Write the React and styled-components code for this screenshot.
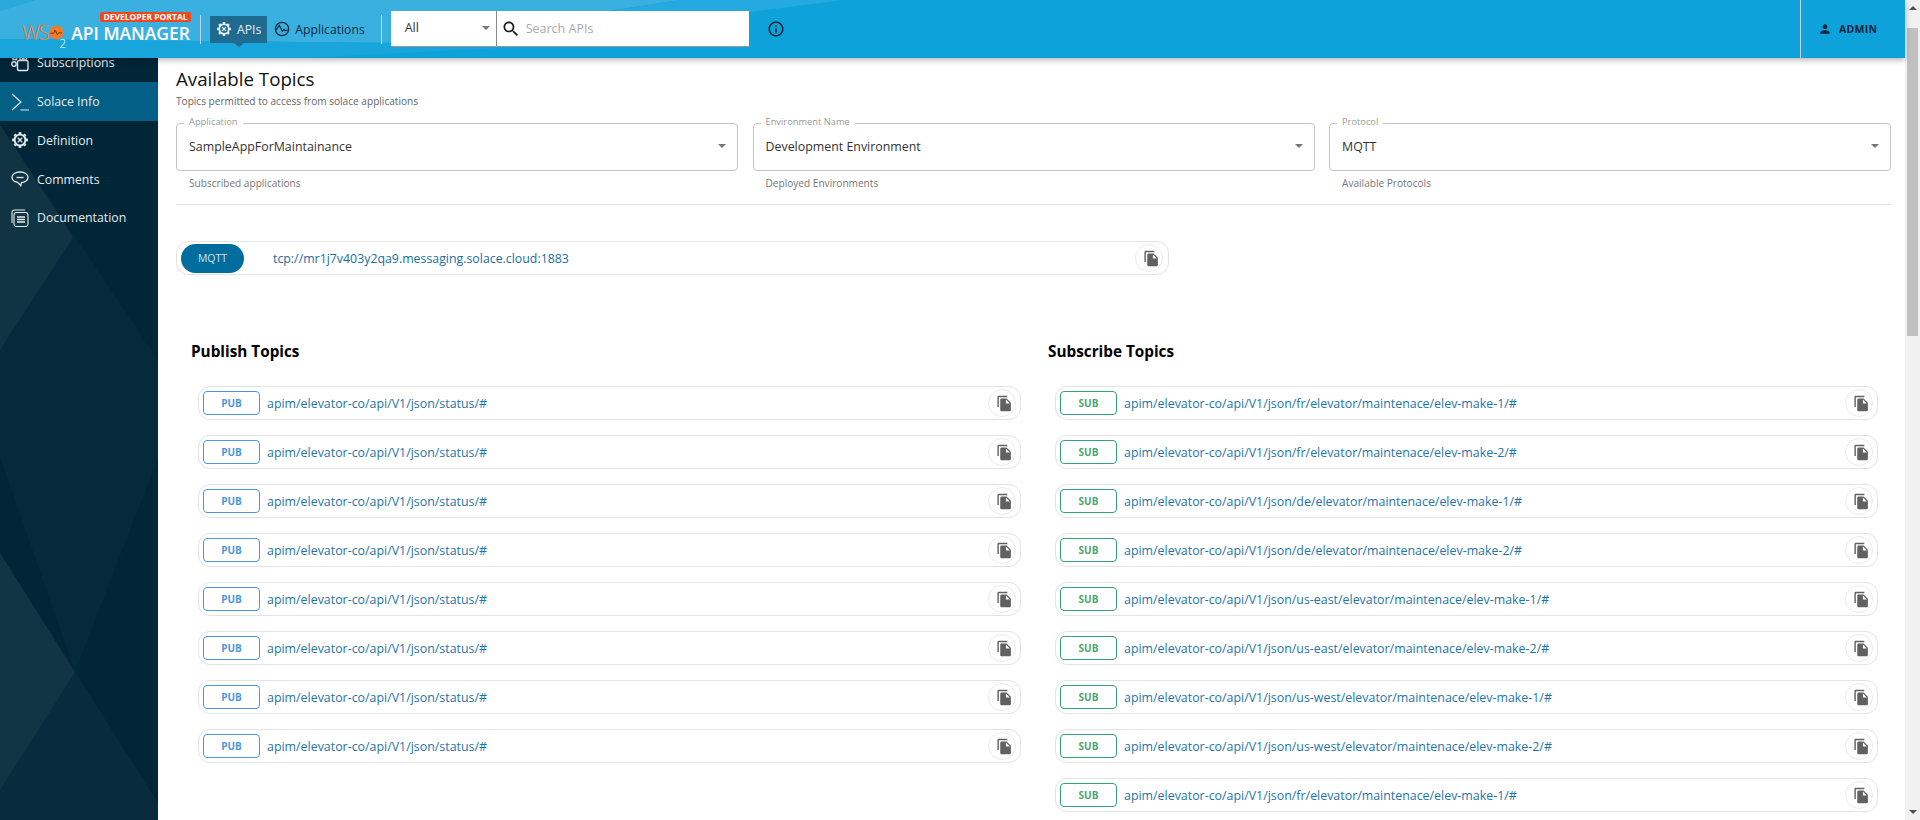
import styled, { createGlobalStyle } from 'styled-components';

const GlobalStyle = createGlobalStyle`
  html, body {
    margin: 0;
    padding: 0;
    height: 100%;
    overflow: hidden;
    background: #fff;
    font-family: "Open Sans", "Noto Sans", sans-serif;
  }
  * {
    box-sizing: border-box;
  }
`;

const publishTopics = Array(8).fill('apim/elevator-co/api/V1/json/status/#');

const subscribeTopics = [
  'apim/elevator-co/api/V1/json/fr/elevator/maintenace/elev-make-1/#',
  'apim/elevator-co/api/V1/json/fr/elevator/maintenace/elev-make-2/#',
  'apim/elevator-co/api/V1/json/de/elevator/maintenace/elev-make-1/#',
  'apim/elevator-co/api/V1/json/de/elevator/maintenace/elev-make-2/#',
  'apim/elevator-co/api/V1/json/us-east/elevator/maintenace/elev-make-1/#',
  'apim/elevator-co/api/V1/json/us-east/elevator/maintenace/elev-make-2/#',
  'apim/elevator-co/api/V1/json/us-west/elevator/maintenace/elev-make-1/#',
  'apim/elevator-co/api/V1/json/us-west/elevator/maintenace/elev-make-2/#',
  'apim/elevator-co/api/V1/json/fr/elevator/maintenace/elev-make-1/#',
];

const fields = [
  { label: 'Application', value: 'SampleAppForMaintainance', help: 'Subscribed applications' },
  { label: 'Environment Name', value: 'Development Environment', help: 'Deployed Environments' },
  { label: 'Protocol', value: 'MQTT', help: 'Available Protocols' },
];

function GearIcon({ size = 18 }) {
  const teeth = [0, 45, 90, 135, 180, 225, 270, 315];
  return (
    <svg width={size} height={size} viewBox="0 0 24 24" fill="none" stroke="currentColor">
      <circle cx="12" cy="12" r="7.2" strokeWidth="2.6" />
      {teeth.map((a) => (
        <line key={a} x1="12" y1="1.5" x2="12" y2="5" strokeWidth="3.6" transform={`rotate(${a} 12 12)`} />
      ))}
      <path d="M9 9l6 6M15 9l-6 6" strokeWidth="1.6" />
    </svg>
  );
}

function PulseIcon() {
  return (
    <svg width="16" height="16" viewBox="0 0 24 24" fill="none" stroke="currentColor" strokeWidth="1.8">
      <circle cx="12" cy="12" r="10" />
      <path d="M2.500 14.500L8 6.500l4.500 9 2.500-3 1.500 2 5-1" />
    </svg>
  );
}

function CopyIcon() {
  return (
    <svg width="17" height="17" viewBox="0 0 24 24" fill="currentColor">
      <path d="M16 1H4c-1.100 0-2 .9-2 2v14h2V3h12V1zm-1 4l6 6v10c0 1.100-.9 2-2 2H7.990C6.890 23 6 22.100 6 21l.01-14c0-1.100.89-2 1.990-2h7zm-1 7h5.500L14 6.500V12z" />
    </svg>
  );
}

function SubscriptionsIcon() {
  return (
    <svg width="18" height="18" viewBox="0 0 18 18" fill="none" stroke="currentColor" strokeWidth="1.4">
      <rect x="6.5" y="6.5" width="10.5" height="10" rx="1.5" />
      <circle cx="3" cy="10" r="2.2" />
      <path d="M2 2.500h3.500v3H2zM9 1.500h2.500v4.500H9zM13 1.500h2.500v4.500H13z" />
    </svg>
  );
}

function TerminalIcon() {
  return (
    <svg width="18" height="18" viewBox="0 0 18 18" fill="none" stroke="currentColor" strokeWidth="1.2">
      <path d="M1 1l9 8-9 8M9.500 17H18" />
    </svg>
  );
}

function CommentIcon() {
  return (
    <svg width="18" height="18" viewBox="0 0 18 18" fill="none" stroke="currentColor" strokeWidth="1.3">
      <path d="M9 2c4.600 0 8 2.200 8 5.300s-3 5.200-6.500 5.300l-.8 3-3-3.300C3.400 11.900 1 10 1 7.300 1 4.200 4.400 2 9 2z" />
      <path d="M5.500 7.500h7" />
    </svg>
  );
}

function DocsIcon() {
  return (
    <svg width="18" height="18" viewBox="0 0 18 18" fill="none" stroke="currentColor" strokeWidth="1.1">
      <rect x="3" y="3.500" width="14" height="14" rx="2.500" />
      <path d="M1 14V3.500A2.500 2.500 0 0 1 3.500 1H14" />
      <path d="M6 8h8M6 10.500h8M6 13h8" strokeWidth="1.3" />
    </svg>
  );
}

function CopyButton() {
  return (
    <RoundButton type="button">
      <CopyIcon />
    </RoundButton>
  );
}

function TopicRow({ kind, topic }) {
  return (
    <Row>
      <Badge $kind={kind}>{kind}</Badge>
      <TopicText>{topic}</TopicText>
      <CopyButton />
    </Row>
  );
}

export default function App() {
  return (
    <Page>
      <GlobalStyle />
      <Main>
        <Header>
          <HeaderArt width="1000" height="58" viewBox="0 0 1000 58">
            <polygon points="0,11 35,0 680,0 400,43 0,39" fill="#3ab0e0" />
            <polygon points="400,43 680,0 843,0 750,12 520,47" fill="#24a9e0" />
            <polygon points="0,0 35,0 0,11" fill="#2aa9dd" />
            <polygon points="0,39 400,43 520,47 300,58 0,58" fill="#18a5dc" />
          </HeaderArt>
          <Logo>
            <LogoBadge>DEVELOPER PORTAL</LogoBadge>
            <LogoWs>WS</LogoWs>
            <svg width="17" height="17" viewBox="0 0 19 19">
              <circle cx="9.5" cy="9.5" r="9" fill="#f47b20" />
              <path d="M2 10.500h4l2-4 3 6 1.500-2.500H17" fill="none" stroke="#3a2a20" strokeWidth="1" />
            </svg>
            <LogoTwo>2</LogoTwo>
            <LogoName>API MANAGER</LogoName>
          </Logo>
          <HeaderDivider />
          <TabItem $active>
            <GearIcon size={16} />
            APIs
          </TabItem>
          <TabItem>
            <PulseIcon />
            Applications
          </TabItem>
          <HeaderDivider />
          <SearchBar>
            <SearchScope>
              All
              <Caret />
            </SearchScope>
            <SearchInput>
              <svg width="20" height="20" viewBox="0 0 24 24" fill="#1b1b1b">
                <path d="M15.500 14h-.79l-.28-.27C15.410 12.590 16 11.110 16 9.500 16 5.910 13.090 3 9.500 3S3 5.910 3 9.500 5.910 16 9.500 16c1.610 0 3.090-.59 4.230-1.570l.27.28v.79l5 4.990L20.490 19l-4.990-5zm-6 0C7.010 14 5 11.990 5 9.500S7.010 5 9.500 5 14 7.010 14 9.500 11.990 14 9.500 14z" />
              </svg>
              <Placeholder>Search APIs</Placeholder>
            </SearchInput>
          </SearchBar>
          <InfoButton>
            <svg width="18" height="18" viewBox="0 0 24 24" fill="currentColor">
              <path d="M11 7h2v2h-2zm0 4h2v6h-2zm1-9C6.480 2 2 6.480 2 12s4.480 10 10 10 10-4.480 10-10S17.520 2 12 2zm0 18c-4.410 0-8-3.590-8-8s3.590-8 8-8 8 3.590 8 8-3.590 8-8 8z" />
            </svg>
          </InfoButton>
          <UserBox>
            <svg width="14" height="14" viewBox="0 0 24 24" fill="currentColor">
              <path d="M12 12c2.210 0 4-1.790 4-4s-1.790-4-4-4-4 1.790-4 4 1.790 4 4 4zm0 2c-2.670 0-8 1.340-8 4v2h16v-2c0-2.660-5.330-4-8-4z" />
            </svg>
            ADMIN
          </UserBox>
        </Header>
        <Body>
          <Sidebar>
            <SidebarArt width="158" height="762" viewBox="0 0 158 762">
              <polygon points="0,67 158,302 158,400 75,614 0,399" fill="#ffffff" opacity="0.02" />
              <polygon points="0,67 73,179 0,292" fill="#ffffff" opacity="0.05" />
              <polygon points="0,495 75,614 0,732" fill="#ffffff" opacity="0.07" />
              <polygon points="75,614 158,745 158,762 0,762 0,732" fill="#ffffff" opacity="0.03" />
            </SidebarArt>
            <NavList>
              <NavItem>
                <SubscriptionsIcon />
                Subscriptions
              </NavItem>
              <NavItem $active>
                <TerminalIcon />
                Solace Info
              </NavItem>
              <NavItem>
                <GearIcon />
                Definition
              </NavItem>
              <NavItem>
                <CommentIcon />
                Comments
              </NavItem>
              <NavItem>
                <DocsIcon />
                Documentation
              </NavItem>
            </NavList>
          </Sidebar>
          <Content>
            <Title>Available Topics</Title>
            <Subtitle>Topics permitted to access from solace applications</Subtitle>
            <Fields>
              {fields.map((field) => (
                <Field key={field.label}>
                  <Outline>
                    <Legend>{field.label}</Legend>
                    {field.value}
                    <FieldCaret />
                  </Outline>
                  <Help>{field.help}</Help>
                </Field>
              ))}
            </Fields>
            <Divider />
            <EndpointRow>
              <ProtocolPill>MQTT</ProtocolPill>
              <EndpointUrl>tcp://mr1j7v403y2qa9.messaging.solace.cloud:1883</EndpointUrl>
              <CopyButton />
            </EndpointRow>
            <Columns>
              <Column>
                <Heading>Publish Topics</Heading>
                <RowList>
                  {publishTopics.map((topic, i) => (
                    <TopicRow key={`${topic}-${i}`} kind="PUB" topic={topic} />
                  ))}
                </RowList>
              </Column>
              <Column>
                <Heading>Subscribe Topics</Heading>
                <RowList>
                  {subscribeTopics.map((topic, i) => (
                    <TopicRow key={`${topic}-${i}`} kind="SUB" topic={topic} />
                  ))}
                </RowList>
              </Column>
            </Columns>
          </Content>
        </Body>
      </Main>
      <Scrollbar>
        <ScrollArrow />
        <ScrollThumb />
        <ScrollArrow $down />
      </Scrollbar>
    </Page>
  );
}

const Page = styled.div`
  display: flex;
  width: 1920px;
  height: 820px;
  overflow: hidden;
`;

const Main = styled.div`
  display: flex;
  flex-direction: column;
  flex: 1;
  min-width: 0;
`;

const Header = styled.header`
  position: relative;
  z-index: 2;
  display: flex;
  align-items: center;
  flex: 0 0 58px;
  padding-left: 22px;
  background: #0ea2db;
  box-shadow: 0 2px 6px rgba(0, 0, 0, 0.3);
`;

const HeaderArt = styled.svg`
  position: absolute;
  top: 0;
  left: 0;
`;

const Logo = styled.div`
  position: relative;
  display: flex;
  align-items: center;
  flex: 0 0 168px;
  min-width: 0;
  height: 58px;
  padding-top: 7px;
`;

const LogoBadge = styled.span`
  position: absolute;
  top: 12px;
  left: 78px;
  width: 91px;
  height: 10px;
  border-radius: 2px;
  background: #f1471d;
  color: #fff;
  font-size: 8.5px;
  font-weight: 700;
  line-height: 10px;
  text-align: center;
  white-space: nowrap;
`;

const LogoWs = styled.span`
  color: #f47b20;
  font-size: 20px;
  font-weight: 300;
  letter-spacing: -1px;
`;

const LogoTwo = styled.span`
  align-self: flex-end;
  margin: 0 5px 7px -4px;
  color: #fff;
  font-size: 12px;
  font-weight: 300;
  line-height: 14px;
`;

const LogoName = styled.span`
  color: #fff;
  font-size: 17.5px;
  font-weight: 600;
  white-space: nowrap;
`;

const HeaderDivider = styled.span`
  position: relative;
  flex: 0 0 1px;
  height: 29px;
  margin: 0 9px 0 10px;
  background: #c4d6dd;
`;

const TabItem = styled.div`
  position: relative;
  display: flex;
  align-items: center;
  gap: 5px;
  height: 27px;
  margin-right: ${(props) => (props.$active ? '7px' : '6px')};
  padding: 0 ${(props) => (props.$active ? '6px' : '0')};
  background: ${(props) => (props.$active ? '#1f6a8f' : 'transparent')};
  color: ${(props) => (props.$active ? '#e6eef2' : '#0d2c40')};
  font-size: 12.2px;
  white-space: nowrap;

  &::after {
    content: '';
    display: ${(props) => (props.$active ? 'block' : 'none')};
    position: absolute;
    left: 24px;
    bottom: -4px;
    border-left: 5px solid transparent;
    border-right: 5px solid transparent;
    border-top: 4px solid #1f6a8f;
  }
`;

const SearchBar = styled.div`
  position: relative;
  display: flex;
  height: 36px;
  border-bottom: 1px solid #999;
  background: #fff;
  font-size: 12.5px;
`;

const SearchScope = styled.div`
  display: flex;
  align-items: center;
  justify-content: space-between;
  width: 106px;
  padding: 0 6px 2px 14px;
  border-right: 1px solid #888;
  color: #333;
`;

const Caret = styled.span`
  border-left: 4px solid transparent;
  border-right: 4px solid transparent;
  border-top: 4px solid #777;
`;

const SearchInput = styled.div`
  display: flex;
  align-items: center;
  gap: 5px;
  width: 252px;
  padding-left: 4px;
`;

const Placeholder = styled.span`
  color: #aaa;
`;

const InfoButton = styled.div`
  position: relative;
  display: flex;
  margin-left: 18px;
  color: #0d2030;
`;

const UserBox = styled.div`
  position: relative;
  display: flex;
  align-items: center;
  gap: 7px;
  align-self: stretch;
  margin-left: auto;
  width: 105px;
  padding-left: 17px;
  border-left: 1px solid #c4d6dd;
  color: #0d2436;
  font-size: 10.5px;
  font-weight: 700;
  letter-spacing: 0.3px;
`;

const Body = styled.div`
  display: flex;
  flex: 1;
  min-height: 0;
`;

const Sidebar = styled.nav`
  position: relative;
  flex: 0 0 158px;
  overflow: hidden;
  background: #012638;
`;

const SidebarArt = styled.svg`
  position: absolute;
  top: 0;
  left: 0;
`;

const NavList = styled.div`
  position: relative;
  margin-top: -14.6px;
`;

const NavItem = styled.div`
  display: flex;
  align-items: center;
  gap: 8px;
  height: 38.8px;
  padding-left: 11px;
  background: ${(props) => (props.$active ? '#035f85' : 'transparent')};
  color: #e4ebef;
  font-size: 12.3px;
`;

const Content = styled.main`
  flex: 1;
  min-width: 0;
  padding: 9px 14px 0 18px;
  overflow: hidden;
`;

const Title = styled.h1`
  margin: 0;
  color: #111;
  font-size: 18.7px;
  font-weight: 400;
  line-height: 24px;
`;

const Subtitle = styled.p`
  margin: 2px 0 0;
  color: #666;
  font-size: 10.1px;
  line-height: 16px;
`;

const Fields = styled.div`
  display: grid;
  grid-template-columns: repeat(3, 562px);
  gap: 14.5px;
  margin-top: 14px;
`;

const Field = styled.div`
  min-width: 0;
`;

const Outline = styled.div`
  position: relative;
  display: flex;
  align-items: center;
  height: 48px;
  padding: 0 12px 1px;
  border: 1px solid #c4c4c4;
  border-radius: 4px;
  color: #333;
  font-size: 12.4px;
`;

const Legend = styled.span`
  position: absolute;
  top: -9px;
  left: 7px;
  padding: 0 5px;
  background: #fff;
  color: #9a9a9a;
  font-size: 9.3px;
  line-height: 14px;
`;

const FieldCaret = styled.span`
  position: absolute;
  top: 20px;
  right: 11px;
  border-left: 4px solid transparent;
  border-right: 4px solid transparent;
  border-top: 4px solid #777;
`;

const Help = styled.p`
  margin: 4px 0 0 13px;
  color: #777;
  font-size: 10.1px;
  line-height: 16px;
`;

const Divider = styled.hr`
  height: 1px;
  margin: 13px 0 0;
  border: 0;
  background: #e0e0e0;
`;

const EndpointRow = styled.div`
  display: flex;
  align-items: center;
  width: 993px;
  height: 34px;
  margin-top: 36px;
  padding: 0 1px 0 4px;
  border: 1px solid #e3e3e3;
  border-radius: 12px;
`;

const ProtocolPill = styled.span`
  display: flex;
  align-items: center;
  justify-content: center;
  width: 63px;
  height: 29px;
  border-radius: 15px;
  background: #006d9e;
  color: #d3e3ec;
  font-size: 10.5px;
`;

const EndpointUrl = styled.span`
  flex: 1;
  margin-left: 29px;
  color: #1a6e9e;
  font-size: 12.35px;
`;

const RoundButton = styled.button`
  display: flex;
  align-items: center;
  justify-content: center;
  flex: 0 0 28px;
  height: 28px;
  margin-right: 4px;
  padding: 0 0 0 4px;
  border: 1px solid #ebebeb;
  border-radius: 50%;
  background: #fff;
  color: #616161;
`;

const Columns = styled.div`
  display: grid;
  grid-template-columns: 857px 1fr;
  margin: 65px 0 0 15px;
`;

const Column = styled.section`
  min-width: 0;
`;

const Heading = styled.h2`
  margin: 0;
  color: #000;
  font-size: 15.3px;
  font-weight: 700;
  line-height: 22px;
`;

const RowList = styled.div`
  display: flex;
  flex-direction: column;
  gap: 15px;
  width: 823px;
  margin: 24px 0 0 7px;
`;

const Row = styled.div`
  display: flex;
  align-items: center;
  flex: 0 0 34px;
  padding: 0 0 0 4px;
  border: 1px solid #e3e3e3;
  border-radius: 12px;
`;

const Badge = styled.span`
  display: flex;
  align-items: center;
  justify-content: center;
  flex: 0 0 57px;
  height: 24px;
  border: 1px solid ${(props) => (props.$kind === 'PUB' ? '#4a97dd' : '#34a572')};
  border-radius: 4px;
  color: ${(props) => (props.$kind === 'PUB' ? '#4a97dd' : '#4ea56f')};
  font-size: 10px;
  font-weight: 700;
`;

const TopicText = styled.span`
  flex: 1;
  margin-left: 7px;
  color: #1f75a8;
  font-size: 12.4px;
`;

const Scrollbar = styled.div`
  display: flex;
  flex-direction: column;
  align-items: center;
  justify-content: space-between;
  flex: 0 0 15px;
  padding: 6px 0;
  background: #f1f1f1;
`;

const ScrollArrow = styled.span`
  border-left: 4px solid transparent;
  border-right: 4px solid transparent;
  border-${(props) => (props.$down ? 'top' : 'bottom')}: 4px solid #505050;
`;

const ScrollThumb = styled.span`
  width: 11px;
  height: 308px;
  margin-top: 18px;
  margin-bottom: auto;
  background: #c1c1c1;
`;
